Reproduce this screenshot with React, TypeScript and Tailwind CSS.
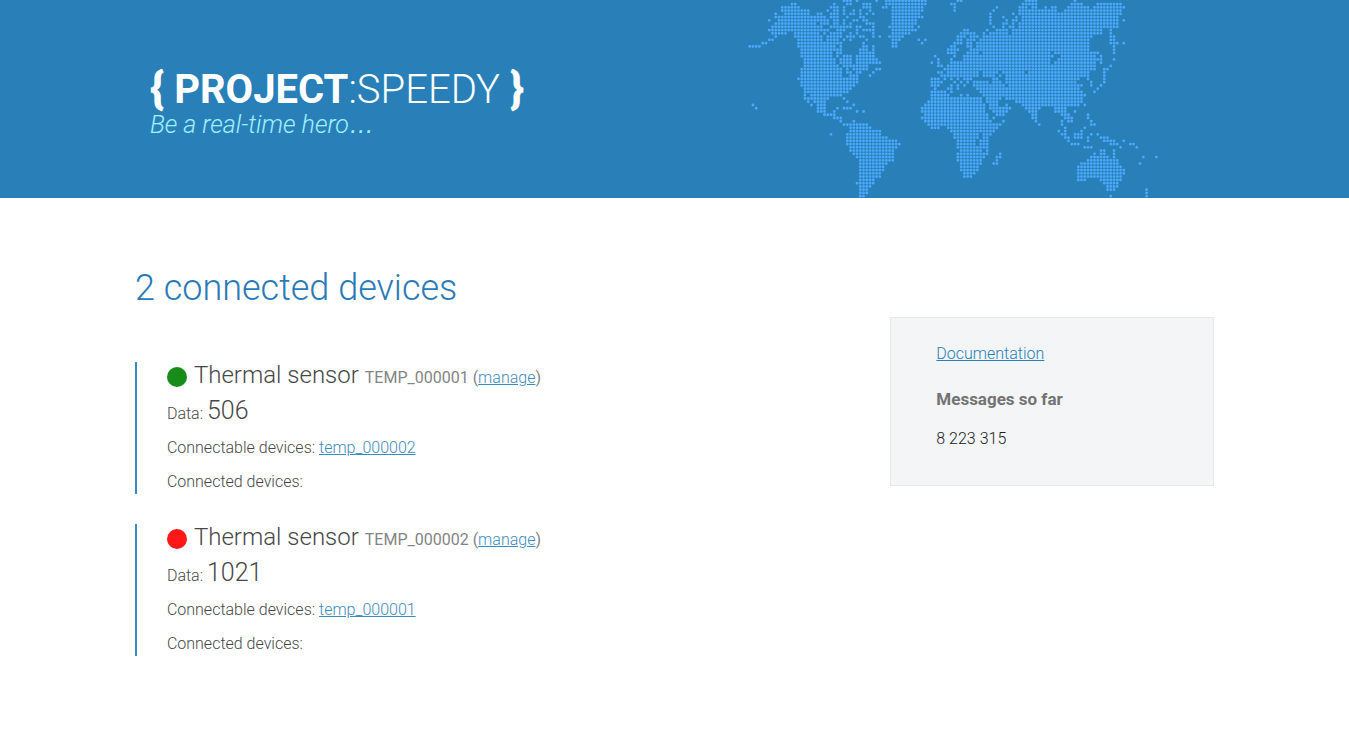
import React from "react";

/* Each line is one row of the dotted world map: inclusive column runs that are filled. */
const MAP_ROWS: string[] = [
  "29-31 33 39 42-54 64-65 85-88 100",
  "13-14 26 30-31 35-37 42-54 62-63 84-88 99-102 107-114",
  "10-15 25-27 29 35-37 41-42 44-53 63 76 83-85 87-88 91 93-94 98-104 106-115",
  "10-18 24 26-27 29 32 34 37 44-53 63 75 83-94 97-114",
  "8 11-18 21-22 25-27 29 31-32 34 36 38 44-52 74 81 83-114",
  "8-23 25-27 30 34-35 44-53 74 78 82 84-113",
  "6 9-24 26-27 29 32-33 35-36 44-51 74 79 81-82 84-113 115",
  "8-20 22-24 26-27 29 31 36-38 44-51 74 78-79 81 83-113",
  "7-22 25-31 33-34 38 43-50 52 75 78 80-81 83-113",
  "6-24 27-29 33 35-38 44-51 66-67 73 76-79 81-108 111",
  "7-11 14-21 23 25-28 31 33 38 44-49 65-69 72 74-79 81-108 111",
  "8 14-22 24-28 30-32 34-35 38 40 43-47 64-66 68-70 72-105 111-112",
  "6-7 15-22 24-27 29 31 36 44-46 52 54 64-65 67-69 71-104 111-112",
  "4-5 15-28 35 44-45 53 63-65 67-68 70-104 111-113 115",
  "0-3 15-26 28 35-36 38 44-45 62-63 67-68 70-104 112",
  "16-28 34-36 38 61-64 68-104 112",
  "16-25 27-28 34-38 61-63 67-70 72-92 94-107 112",
  "16-25 27 29-31 33-38 57 63 66-93 96-106 108",
  "17-26 28-31 33-39 58 62 66-92 95-108 112",
  "17-26 28-31 33-40 56 58 62-92 94-106 108",
  "17-27 29-36 58-59 61-106 111",
  "16-28 30 32-36 39-40 60-106 109-110",
  "16-28 30-31 33-34 38 58-59 61-70 72-76 78-84 86-104 109",
  "16-28 31-33 37 59-70 72-75 77 79-104 109",
  "15-33 56-58 60 62 64 66-68 75-76 79-101 104 109",
  "16-33 56-59 63 65 67 69-73 75-77 79-100 105 109",
  "16-32 56-58 62 64 66 69-78 80-102 105 108",
  "17-31 57 61-62 64 70-101 107",
  "17-30 56-60 62 71-102 106",
  "17 19-28 56-61 65 67 72-103",
  "17-24 29 56-71 73-77 79-102",
  "18 20-23 30 55-71 73-76 82-102",
  "1 19 21-23 32 54-72 74-76 79 84-101 103",
  "2 21-23 27 29-31 53-72 74-80 85-89 94-97",
  "21-23 26 33 35 53-72 75-79 86-88 94-97 100",
  "23-26 54-73 76-78 87-88 96-98 104",
  "26-28 53-73 75 87-88 97-99 104",
  "28 32 54-74 78 88 96 98-99 105",
  "29-36 55-77 89 96 105-106",
  "31-37 56-58 61-76 97 103",
  "31-40 62-75 95 97 102",
  "25 30-40 63-70 72-74 96-97 100-102 105 107",
  "30-42 63-70 72-73 97-98 100-102 104 108-110",
  "30-45 64-69 71-73 98 104 109-112 115",
  "30-46 64-69 71-73 99-101 111-113 117-118",
  "31-45 64-73 103-105 114 119",
  "31-44 65-71 73 108-109 112",
  "32-44 64-73 77 106 108-109 112",
  "33-44 64-72 76-77 105-110 112 121 125",
  "34-44 64-71 76 104-113",
  "34-42 65-71 75-76 102-113 120",
  "34-41 65-70 101-114",
  "34-41 65-70 101-115",
  "34-40 66-69 101-115",
  "34-40 66-68 101-114",
  "34-38 101-103 108-114",
  "33-38 109-113",
  "34-37 110-113",
  "34-36 110-112 122",
  "34-36 122",
  "34-35 111 122",
];

const PITCH_X = 3.253;
const PITCH_Y = 3.256;

const mapPath = MAP_ROWS.map((row, r) =>
  row
    .split(" ")
    .map((run) => {
      const [from, to = from] = run.split("-").map(Number);
      let d = "";
      for (let c = from; c <= to; c++) {
        d += `M${(1.7 + c * PITCH_X).toFixed(2)} ${(0.8 + r * PITCH_Y).toFixed(2)}h0`;
      }
      return d;
    })
    .join("")
).join("");

function WorldMap() {
  return (
    <svg
      aria-hidden="true"
      viewBox="0 0 412 198"
      className="absolute top-0 right-[189px] h-[198px] w-[412px]"
    >
      <path d={mapPath} fill="none" stroke="#4da9fb" strokeWidth="2.8" strokeLinecap="round" />
    </svg>
  );
}

type Device = { name: string; id: string; data: number; online: boolean; connectable: string };

const devices: Device[] = [
  { name: "Thermal sensor", id: "TEMP_000001", data: 506, online: true, connectable: "temp_000002" },
  { name: "Thermal sensor", id: "TEMP_000002", data: 1021, online: false, connectable: "temp_000001" },
];

function DeviceItem({ device }: { device: Device }) {
  return (
    <li className="border-l-2 border-[#2980b9] pl-[30px] text-[#333] opacity-90">
      <h2 className="flex h-[30px] items-baseline text-2xl leading-[26px] font-light">
        <span
          className={
            device.online
              ? "mr-[7px] size-5 self-center rounded-full bg-[#008000]"
              : "mr-[7px] size-5 self-center rounded-full bg-[#ff0000]"
          }
        />
        {device.name}
        <span className="ml-1.5 text-base font-normal text-[#777]">
          {device.id} (
          <a href="#manage" className="font-light text-[#2980b9] underline">
            manage
          </a>
          )
        </span>
      </h2>
      <p className="h-[39px] leading-[37px]">
        Data: <span className="text-[25px]">{device.data}</span>
      </p>
      <p className="h-[34px] leading-[34px]">
        Connectable devices:{" "}
        <a href="#device" className="text-[#2980b9] underline">
          {device.connectable}
        </a>
      </p>
      <p className="h-[29px] leading-[34px]">Connected devices:</p>
    </li>
  );
}

export default function App() {
  return (
    <div className="min-h-screen bg-white font-['Roboto',sans-serif] text-base font-light text-[#222]">
      <header className="relative h-[198px] overflow-hidden bg-[#2980b9]">
        <WorldMap />
        <div className="relative mx-auto w-4/5 px-[15px] pt-[65px]">
          <h1 className="h-[46px] text-[40px] leading-[46px] font-light text-white">
            <b className="text-[44px] font-black">{"{"}</b>
            <b className="font-bold">{" PROJECT"}</b>:SPEEDY{" "}
            <b className="text-[44px] font-black">{"}"}</b>
          </h1>
          <p className="text-[25px] leading-[26px] text-[#a0f0ff] italic">
            Be a real-time hero<span className="font-['Liberation_Sans',sans-serif]">…</span>
          </p>
        </div>
      </header>
      <div className="mx-auto flex w-4/5 items-start justify-between pt-[66px]">
        <main>
          <h1 className="mb-[50px] text-4xl leading-[48px] font-light text-[#2a7ab8]">
            2 connected devices
          </h1>
          <ul className="flex flex-col gap-[30px]">
            {devices.map((device) => (
              <DeviceItem key={device.id} device={device} />
            ))}
          </ul>
        </main>
        <aside className="mt-[53px] w-[30%] border border-[#e6e8ea] bg-[#f3f5f7] px-[45px] pt-6 pb-[34px] leading-6">
          <a href="#documentation" className="text-[#2980b9] underline">
            Documentation
          </a>
          <h2 className="mt-[21px] text-[17px] font-bold text-[#737373]">Messages so far</h2>
          <p className="mt-4">8 223 315</p>
        </aside>
      </div>
    </div>
  );
}
